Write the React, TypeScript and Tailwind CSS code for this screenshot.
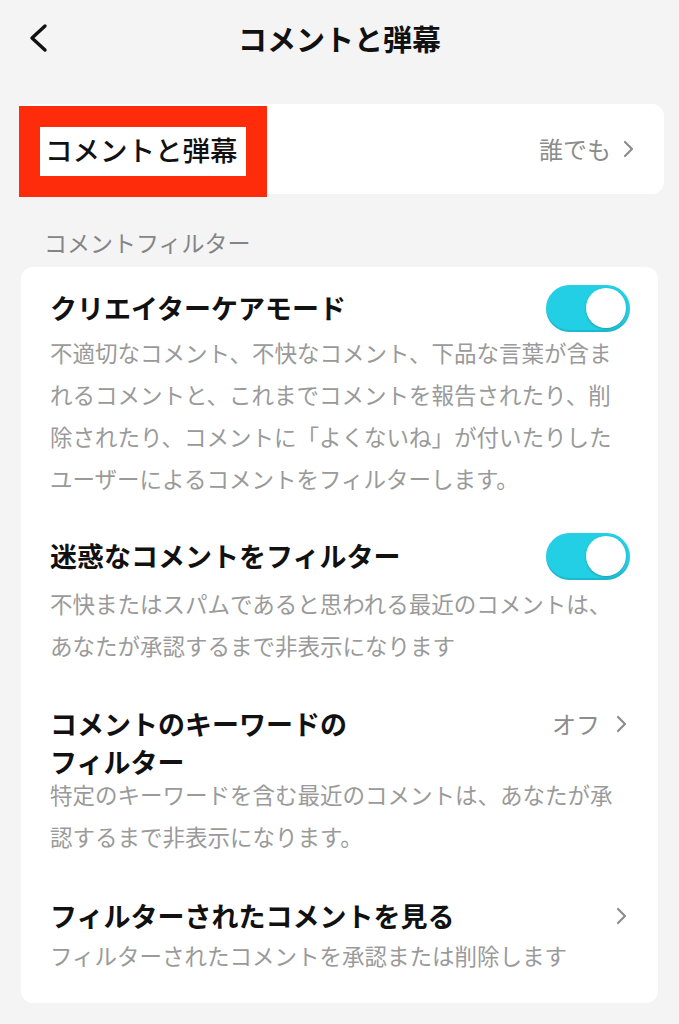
import React from 'react';

const FONT = { fontFamily: '"Noto Sans CJK JP", "Noto Sans", sans-serif' };

function Chevron({ className = '' }: { className?: string }) {
  return (
    <svg viewBox="0 0 16 20" className={className} fill="none" stroke="currentColor" strokeWidth="2.2" strokeLinecap="round" strokeLinejoin="round">
      <polyline points="4,3 11,10 4,17" />
    </svg>
  );
}

function Toggle() {
  return (
    <div className="flex h-[47px] w-[84px] items-center justify-end rounded-full bg-[#23cfe4] pr-[4px] shadow-[inset_0_-2px_0_rgba(0,120,140,0.25)]">
      <div className="h-[40px] w-[40px] rounded-full bg-white shadow-[0_1px_2px_rgba(0,0,0,0.25)]" />
    </div>
  );
}

type Row = {
  title: string[];
  lines: string[];
  right: 'toggle' | 'chevron' | 'off';
  descMt: string;
  mt: string;
};

const ROWS: Row[] = [
  {
    title: ['クリエイターケアモード'],
    lines: [
      '不適切なコメント、不快なコメント、下品な言葉が含ま',
      'れるコメントと、これまでコメントを報告されたり、削',
      '除されたり、コメントに「よくないね」が付いたりした',
      'ユーザーによるコメントをフィルターします。',
    ],
    right: 'toggle',
    descMt: 'mt-[12px]',
    mt: 'mt-0',
  },
  {
    title: ['迷惑なコメントをフィルター'],
    lines: [
      '不快またはスパムであると思われる最近のコメントは、',
      'あなたが承認するまで非表示になります',
    ],
    right: 'toggle',
    descMt: 'mt-[15px]',
    mt: 'mt-[46px]',
  },
  {
    title: ['コメントのキーワードの', 'フィルター'],
    lines: [
      '特定のキーワードを含む最近のコメントは、あなたが承',
      '認するまで非表示になります。',
    ],
    right: 'off',
    descMt: 'mt-0',
    mt: 'mt-[47px]',
  },
  {
    title: ['フィルターされたコメントを見る'],
    lines: ['フィルターされたコメントを承認または削除します'],
    right: 'chevron',
    descMt: 'mt-[7px]',
    mt: 'mt-[48px]',
  },
];

export default function App() {
  return (
    <div className="min-h-screen w-[679px] bg-[#f4f4f4] pb-[21px]" style={FONT}>
      {/* header */}
      <div className="grid h-[76px] grid-cols-[70px_1fr_70px] items-center">
        <div className="pl-[26px] text-[#111]">
          <svg viewBox="0 0 24 30" className="h-[30px] w-[24px]" fill="none" stroke="currentColor" strokeWidth="3.4" strokeLinecap="round" strokeLinejoin="round">
            <polyline points="19,3 6,15 19,27" />
          </svg>
        </div>
        <h1 className="text-center text-[29px] font-bold leading-[40px] text-[#111]">コメントと弾幕</h1>
        <div />
      </div>

      {/* comments & danmaku */}
      <div className="relative ml-[20px] mr-[15px] mt-[28px] flex h-[90px] items-center justify-between rounded-[12px] bg-white pl-[25px] pr-[27px]">
        <span className="text-[27.5px] font-medium leading-[36px] text-[#111]">コメントと弾幕</span>
        <div className="flex items-center gap-[10px] text-[#8c8c8c]">
          <span className="text-[24px] leading-[32px]">誰でも</span>
          <Chevron className="h-[20px] w-[16px]" />
        </div>
        <div className="pointer-events-none absolute left-[-1px] top-[2px] h-[91px] w-[248px] border-[21px] border-[#fe2c0b]" />
      </div>

      <div className="ml-[44px] mt-[32px] text-[23px] leading-[32px] text-[#858585]">コメントフィルター</div>

      {/* filters */}
      <div className="mx-[21px] mt-[9px] rounded-[12px] bg-white pb-[33px] pl-[29px] pr-[28px] pt-[24px]">
        {ROWS.map((r, i) => (
          <div key={i} className={`flex items-start ${r.mt}`}>
            <div className="w-0 min-w-0 flex-1">
              <div className="flex flex-col gap-[4px] text-[27px] font-semibold leading-[34px] text-[#111]">
                {r.title.map(t => (
                  <div key={t}>{t}</div>
                ))}
              </div>
              <div className={`${r.descMt} flex flex-col gap-[12px] text-[22.5px] leading-[30px] text-[#9a9a9a]`}>
                {r.lines.map(l => (
                  <div key={l} className="whitespace-nowrap">{l}</div>
                ))}
              </div>
            </div>
            <div className="flex h-[34px] shrink-0 items-center">
              {r.right === 'toggle' ? <Toggle /> : null}
              {r.right === 'off' ? (
                <div className="flex items-center gap-[14px] text-[#8c8c8c]">
                  <span className="text-[24px] leading-[32px]">オフ</span>
                  <Chevron className="h-[20px] w-[16px]" />
                </div>
              ) : null}
              {r.right === 'chevron' ? <Chevron className="h-[20px] w-[16px] text-[#8c8c8c]" /> : null}
            </div>
          </div>
        ))}
      </div>
    </div>
  );
}
